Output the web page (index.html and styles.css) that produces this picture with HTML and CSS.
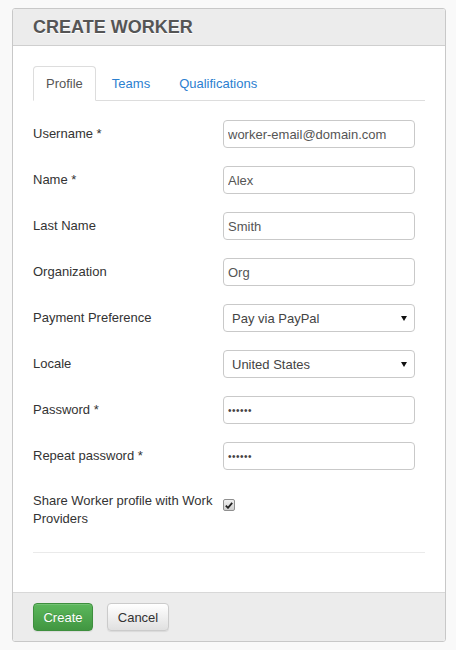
FILE: index.html
```html
<!DOCTYPE html>
<html lang="en">
<head>
<meta charset="utf-8">
<title>Create Worker</title>
<link rel="stylesheet" href="styles.css">
</head>
<body>
<div class="panel">
  <div class="panel-head"><h1>CREATE WORKER</h1></div>
  <div class="panel-body">
    <ul class="tabs">
      <li class="tab active">Profile</li>
      <li class="tab">Teams</li>
      <li class="tab">Qualifications</li>
    </ul>
    <form class="form">
      <div class="row"><label class="lbl">Username *</label><input class="ctl" type="text" value="worker-email@domain.com"></div>
      <div class="row"><label class="lbl">Name *</label><input class="ctl" type="text" value="Alex"></div>
      <div class="row"><label class="lbl">Last Name</label><input class="ctl" type="text" value="Smith"></div>
      <div class="row"><label class="lbl">Organization</label><input class="ctl" type="text" value="Org"></div>
      <div class="row"><label class="lbl">Payment Preference</label><div class="sel-wrap"><select class="ctl sel"><option>Pay via PayPal</option></select></div></div>
      <div class="row"><label class="lbl">Locale</label><div class="sel-wrap"><select class="ctl sel"><option>United States</option></select></div></div>
      <div class="row"><label class="lbl">Password *</label><input class="ctl pw" type="password" value="secret"></div>
      <div class="row"><label class="lbl">Repeat password *</label><input class="ctl pw" type="password" value="secret"></div>
      <div class="row row-check"><label class="lbl lbl-wrap">Share Worker profile with Work Providers</label>
        <span class="check"><svg width="8" height="7" viewBox="0 0 8 7"><path d="M0.8 3.6 L3 5.8 L7.2 0.9" fill="none" stroke="#222" stroke-width="1.8"/></svg></span>
      </div>
    </form>
    <hr class="rule">
  </div>
  <div class="panel-foot">
    <button class="btn btn-create" type="button">Create</button>
    <button class="btn btn-cancel" type="button">Cancel</button>
  </div>
</div>
</body>
</html>
```
FILE: styles.css
```css
html, body { background: #f9f9f9; }
body {
  margin: 8px 10px 0 12px;
  font-family: "Liberation Sans", Arial, sans-serif;
  font-size: 13px;
  line-height: 18px;
  color: #333;
}
.panel {
  background: #fff;
  border: 1px solid #c8c8c8;
  border-radius: 3px;
  overflow: hidden;
}
.panel-head {
  height: 36px;
  background: #ececec;
  border-bottom: 1px solid #cfcfcf;
  padding: 0 20px;
  display: flex;
  align-items: center;
}
.panel-head h1 {
  margin: 0;
  font-size: 18px;
  font-weight: 700;
  color: #555;
  text-shadow: 0 1px 0 #fff;
  line-height: 20px;
}
.panel-body { padding: 20px 20px 39px; }
.tabs {
  list-style: none;
  margin: 0;
  padding: 0;
  display: flex;
  border-bottom: 1px solid #ddd;
}
.tab {
  padding: 8px 12px 7px;
  margin-right: 3px;
  margin-bottom: -1px;
  border: 1px solid transparent;
  border-radius: 4px 4px 0 0;
  color: #2b80d0;
}
.tab.active {
  color: #555;
  background: #fff;
  border-color: #ddd #ddd transparent;
}
.form { margin-top: 19px; }
.row {
  display: grid;
  grid-template-columns: 190px 192px;
  align-items: center;
  margin-bottom: 18px;
}
.ctl {
  box-sizing: border-box;
  height: 28px;
  width: 192px;
  margin: 0;
  border: 1px solid #c9c9c9;
  border-radius: 4px;
  padding: 0 4px;
  font-family: "Liberation Sans", Arial, sans-serif;
  font-size: 13px;
  color: #555;
  background: #fff;
  outline: none;
}
.pw { font-size: 10px; letter-spacing: 0.5px; color: #444; }
.sel-wrap { position: relative; width: 192px; }
.sel {
  -webkit-appearance: none;
  appearance: none;
  padding: 0 20px 0 8px;
  color: #444;
}
.sel-wrap::after {
  content: "";
  position: absolute;
  right: 8px;
  top: 12px;
  border-left: 3px solid transparent;
  border-right: 3px solid transparent;
  border-top: 5px solid #111;
  pointer-events: none;
}
.row-check {
  align-items: start;
  margin-bottom: 0;
  padding-top: 4px;
}
.lbl-wrap { width: 182px; }
.check {
  box-sizing: border-box;
  width: 12px;
  height: 12px;
  margin-top: 7px;
  border: 1px solid #8f8f8f;
  border-radius: 2px;
  background: linear-gradient(#f0f0f0, #cfcfcf);
  display: flex;
  align-items: center;
  justify-content: center;
}
.check svg { display: block; }
.rule {
  margin: 24px 0 0;
  border: 0;
  border-top: 1px solid #eaeaea;
  height: 0;
}
.panel-foot {
  background: #ececec;
  border-top: 1px solid #d8d8d8;
  padding: 10px 20px;
  display: flex;
  gap: 14px;
}
.btn {
  box-sizing: border-box;
  height: 28px;
  padding: 0 8px;
  border-radius: 4px;
  font-family: "Liberation Sans", Arial, sans-serif;
  font-size: 13px;
  cursor: pointer;
}
.btn-create {
  color: #fff;
  border: 1px solid #3e8f3e;
  background: linear-gradient(#5cb85c, #419641);
  text-shadow: 0 -1px 0 rgba(0,0,0,0.15);
  box-shadow: inset 0 1px 0 rgba(255,255,255,0.15), 0 1px 1px rgba(0,0,0,0.08);
  width: 60px;
}
.btn-cancel {
  color: #333;
  border: 1px solid #cbcbcb;
  background: linear-gradient(#fff, #e0e0e0);
  box-shadow: inset 0 1px 0 rgba(255,255,255,0.15), 0 1px 1px rgba(0,0,0,0.08);
  width: 62px;
}
```
